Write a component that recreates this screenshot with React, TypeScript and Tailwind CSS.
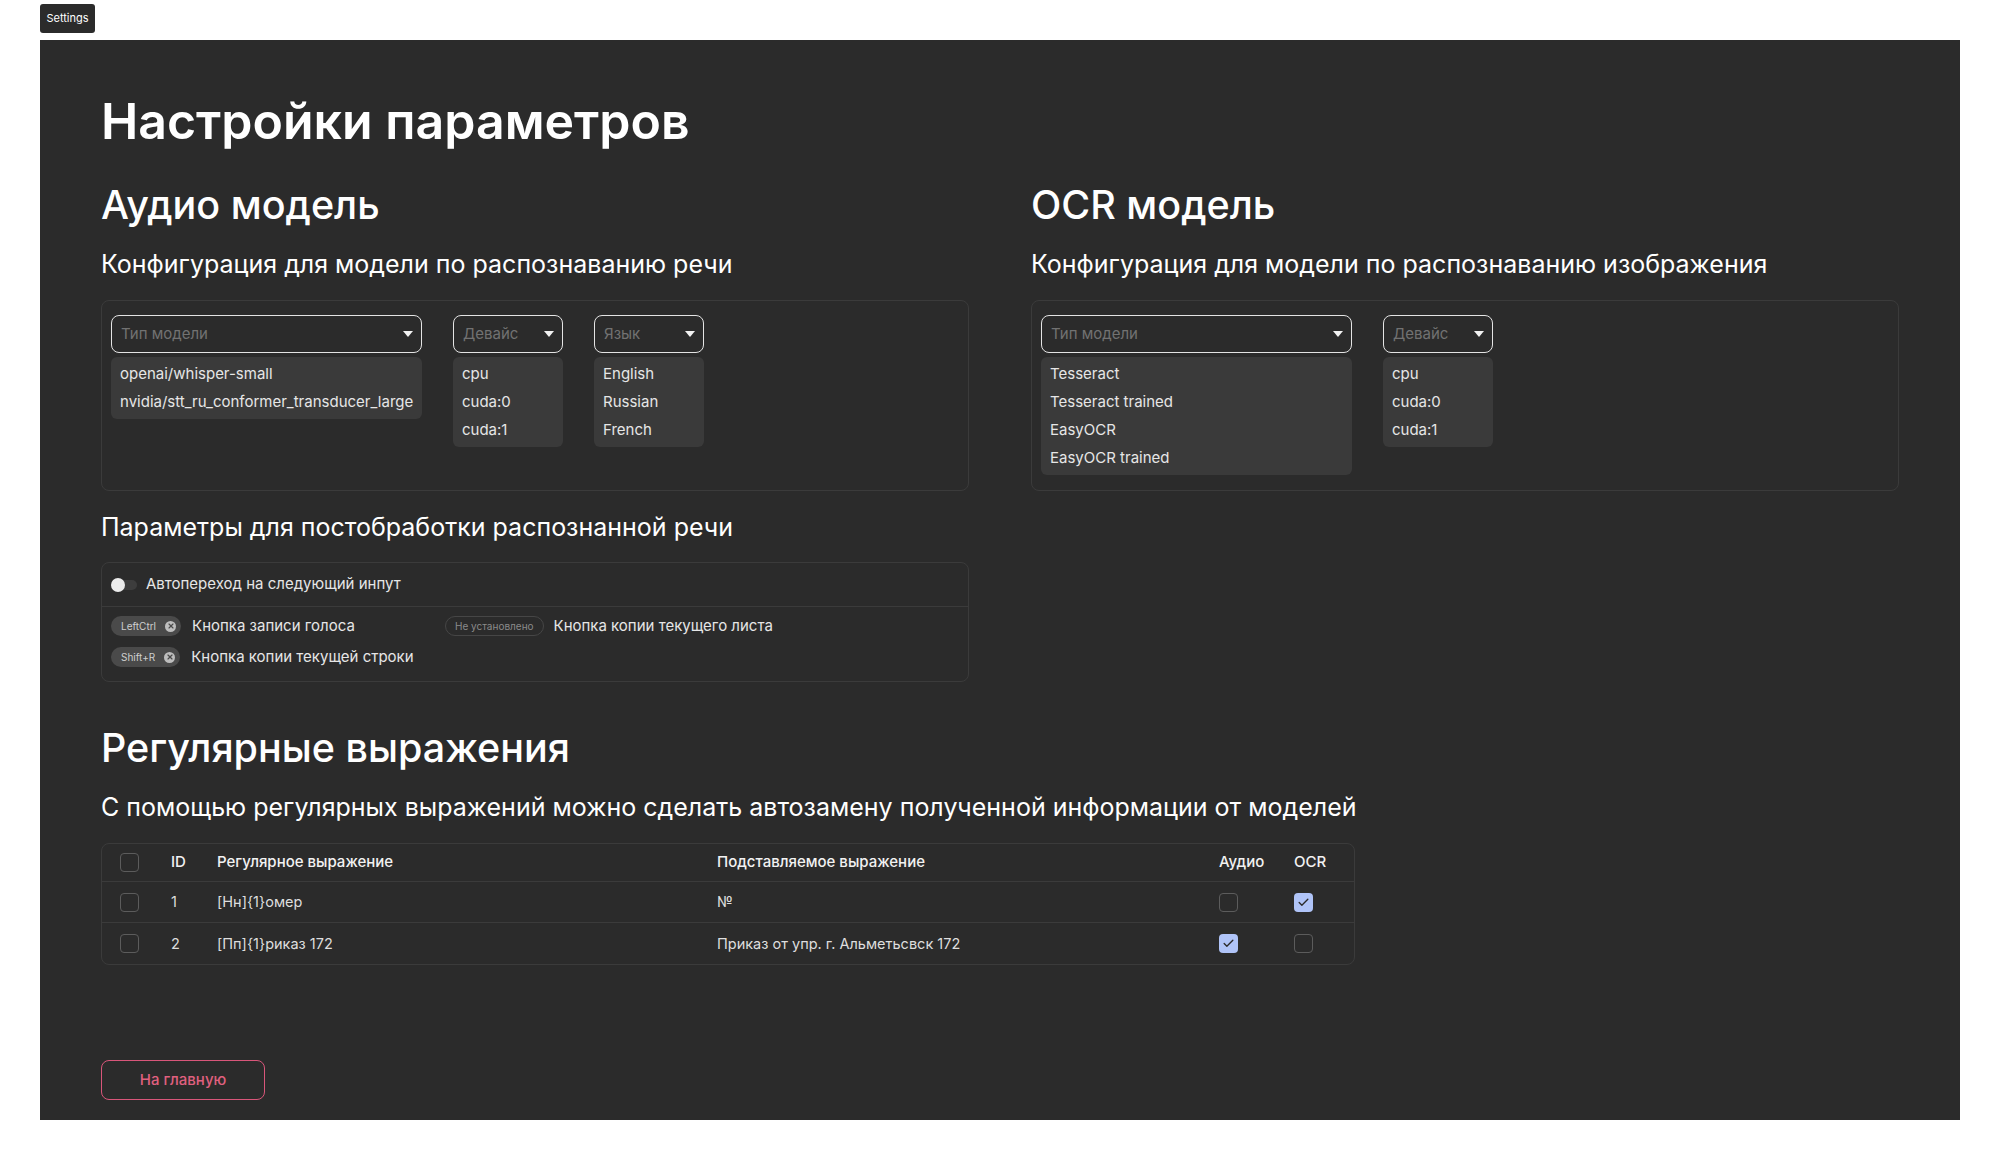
import { Check, X } from "lucide-react";

type SelectProps = {
  placeholder: string;
  options: string[];
  width: string;
};

function Caret() {
  return (
    <svg width="10" height="6" viewBox="0 0 10 6" className="shrink-0">
      <path d="M0 0 L10 0 L5 6 Z" fill="#f2f2f2" />
    </svg>
  );
}

function OpenSelect({ placeholder, options, width }: SelectProps) {
  return (
    <div className={`flex flex-col gap-1 ${width}`}>
      <div className="flex h-[38px] items-center justify-between rounded-lg border border-[#e4e4e4] pl-[9px] pr-[8px]">
        <span className="text-[15px] text-[#727272]">{placeholder}</span>
        <Caret />
      </div>
      <div className="rounded-md bg-[#3a3a3a] py-[3px]">
        {options.map((o) => (
          <div key={o} className="flex h-7 items-center px-[9px] text-[15px] text-[#e6e6e6]">
            {o}
          </div>
        ))}
      </div>
    </div>
  );
}

function Checkbox({ checked = false }: { checked?: boolean }) {
  if (checked) {
    return (
      <div className="flex h-[19px] w-[19px] items-center justify-center rounded-[4px] bg-[#b0c4f8]">
        <Check className="h-[13px] w-[13px] text-[#2b2b2b]" strokeWidth={2.5} />
      </div>
    );
  }
  return <div className="h-[19px] w-[19px] rounded-[4px] border-[1.5px] border-[#5c5c5c]" />;
}

function KeyChip({ label }: { label: string }) {
  return (
    <span className="flex h-5 items-center gap-[9px] rounded-full bg-[#4a4a4a] pl-[10px] pr-[5px] text-[10px] text-[#cfcfcf]">
      {label}
      <span className="flex h-[11px] w-[11px] items-center justify-center rounded-full bg-[#bdbdbd]">
        <X className="h-[8px] w-[8px] text-[#4a4a4a]" strokeWidth={3.5} />
      </span>
    </span>
  );
}

const rules = [
  { id: 1, regex: "[Нн]{1}омер", value: "№", audio: false, ocr: true },
  { id: 2, regex: "[Пп]{1}риказ 172", value: "Приказ от упр. г. Альметьсвск 172", audio: true, ocr: false },
];

const cols = "grid-cols-[69px_46px_500px_502px_75px_1fr]";

export default function App() {
  return (
    <div className="min-h-screen bg-white font-['Inter',sans-serif]">
      <div className="pl-10 pt-1">
        <button className="flex h-[29px] w-[55px] items-center justify-center rounded-[3px] bg-[#2b2b2b] text-[11px] text-white">
          Settings
        </button>
      </div>

      <div className="mx-10 mt-[7px] bg-[#2b2b2b] px-[61px] pb-[20px] pt-[52px] text-white">
        <h1 className="text-[50px] font-semibold leading-[58px]">Настройки параметров</h1>

        <div className="mt-[32px] grid grid-cols-[868px_868px] gap-x-[62px]">
          <div>
            <h2 className="text-[39.5px] font-medium leading-[46px]">Аудио модель</h2>
            <p className="mt-[20px] text-[25px] leading-[32px]">Конфигурация для модели по распознаванию речи</p>
            <div className="mt-[20px] flex h-[191px] items-start gap-[31px] rounded-lg border border-[#3b3b3b] px-[9px] pt-[14px]">
              <OpenSelect
                placeholder="Тип модели"
                width="w-[311px]"
                options={["openai/whisper-small", "nvidia/stt_ru_conformer_transducer_large"]}
              />
              <OpenSelect placeholder="Девайс" width="w-[110px]" options={["cpu", "cuda:0", "cuda:1"]} />
              <OpenSelect placeholder="Язык" width="w-[110px]" options={["English", "Russian", "French"]} />
            </div>

            <p className="mt-[20px] text-[25px] leading-[32px]">Параметры для постобработки распознанной речи</p>
            <div className="mt-[19px] rounded-lg border border-[#3b3b3b]">
              <div className="flex h-[44px] items-center gap-[9px] border-b border-[#3b3b3b] pl-[9px]">
                <div className="relative h-[10px] w-[26px] rounded-full bg-[#3d3d3d]">
                  <div className="absolute -top-[2px] left-0 h-[14px] w-[14px] rounded-full bg-[#ececec]" />
                </div>
                <span className="text-[15px] text-[#e6e6e6]">Автопереход на следующий инпут</span>
              </div>
              <div className="grid grid-cols-[334px_1fr] gap-y-[7px] px-[9px] pb-[12px] pt-[7px]">
                <div className="flex h-6 items-center gap-[11px]">
                  <KeyChip label="LeftCtrl" />
                  <span className="text-[15px] text-[#e6e6e6]">Кнопка записи голоса</span>
                </div>
                <div className="flex h-6 items-center gap-[10px]">
                  <span className="flex h-5 items-center rounded-full border border-[#464646] px-[9px] text-[10px] text-[#8a8a8a]">
                    Не установлено
                  </span>
                  <span className="text-[15px] text-[#e6e6e6]">Кнопка копии текущего листа</span>
                </div>
                <div className="flex h-6 items-center gap-[11px]">
                  <KeyChip label="Shift+R" />
                  <span className="text-[15px] text-[#e6e6e6]">Кнопка копии текущей строки</span>
                </div>
              </div>
            </div>
          </div>

          <div>
            <h2 className="text-[39.5px] font-medium leading-[46px]">OCR модель</h2>
            <p className="mt-[20px] text-[25px] leading-[32px]">Конфигурация для модели по распознаванию изображения</p>
            <div className="mt-[20px] flex h-[191px] items-start gap-[31px] rounded-lg border border-[#3b3b3b] px-[9px] pt-[14px]">
              <OpenSelect
                placeholder="Тип модели"
                width="w-[311px]"
                options={["Tesseract", "Tesseract trained", "EasyOCR", "EasyOCR trained"]}
              />
              <OpenSelect placeholder="Девайс" width="w-[110px]" options={["cpu", "cuda:0", "cuda:1"]} />
            </div>
          </div>
        </div>

        <h2 className="mt-[43px] text-[39.5px] font-medium leading-[46px]">Регулярные выражения</h2>
        <p className="mt-[20px] text-[25px] leading-[32px]">
          С помощью регулярных выражений можно сделать автозамену полученной информации от моделей
        </p>

        <div className="mt-[20px] w-[1254px] rounded-lg border border-[#3b3b3b]">
          <div className={`grid h-[38px] ${cols} items-center border-b border-[#3b3b3b] text-[15px] font-medium text-[#f2f2f2]`}>
            <div className="pl-[18px]">
              <Checkbox />
            </div>
            <div>ID</div>
            <div>Регулярное выражение</div>
            <div>Подставляемое выражение</div>
            <div>Аудио</div>
            <div>OCR</div>
          </div>
          {rules.map((r, i) => (
            <div
              key={r.id}
              className={`grid h-[41px] ${cols} items-center text-[14.5px] text-[#dedede] ${
                i < rules.length - 1 ? "border-b border-[#3b3b3b]" : ""
              }`}
            >
              <div className="pl-[18px]">
                <Checkbox />
              </div>
              <div>{r.id}</div>
              <div>{r.regex}</div>
              <div>{r.value}</div>
              <div>
                <Checkbox checked={r.audio} />
              </div>
              <div>
                <Checkbox checked={r.ocr} />
              </div>
            </div>
          ))}
        </div>

        <button className="mt-[95px] flex h-[40px] w-[164px] items-center justify-center rounded-lg border-[1.5px] border-[#d9567a] text-[15px] font-medium text-[#e0607f]">
          На главную
        </button>
      </div>
    </div>
  );
}
